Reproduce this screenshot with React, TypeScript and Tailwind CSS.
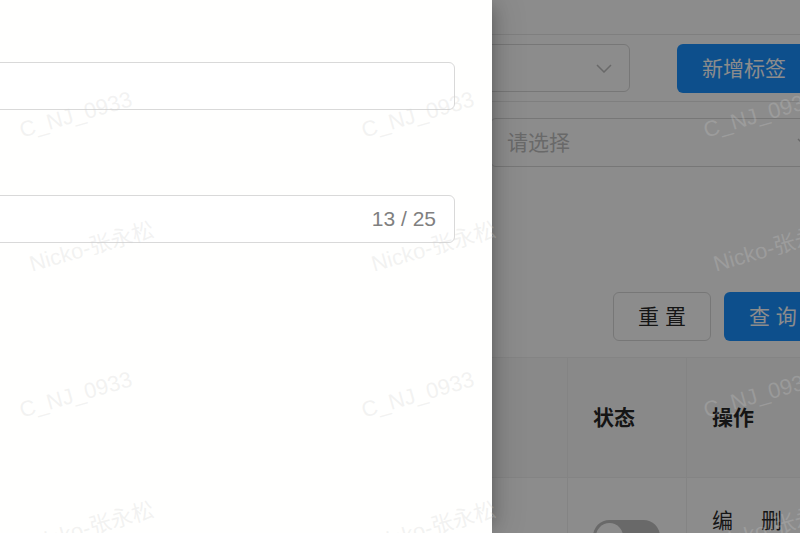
import React from 'react'

const font = { fontFamily: '"Liberation Sans", "Noto Sans CJK SC", sans-serif' }

const Chevron = ({ className }: { className?: string }) => (
    <svg className={className} width="16" height="9" viewBox="0 0 16 9" fill="none">
        <path d="M1 1 L8 8 L15 1" stroke="#bfbfbf" strokeWidth="1.5" />
    </svg>
)

const Watermarks = () => {
    const tiles = Array.from({ length: 6 })
    return (
        <div className="absolute inset-0 overflow-hidden pointer-events-none">
            <div className="flex flex-wrap w-[1026px]">
                {tiles.map((_, i) => (
                    <div key={i} className="w-[342px] h-[280px] shrink-0 pt-[120px]">
                        <div className="ml-[20px] w-max h-[22px] leading-[22px] text-[22px] origin-left rotate-[-16deg] whitespace-nowrap text-[rgba(205,205,205,0.26)]">
                            C_NJ_0933
                        </div>
                        <div className="ml-[30px] mt-[112px] w-max h-[22px] leading-[22px] text-[22px] origin-left rotate-[-16deg] whitespace-nowrap text-[rgba(205,205,205,0.26)]">
                            Nicko-张永松
                        </div>
                    </div>
                ))}
            </div>
        </div>
    )
}

export default function App() {
    return (
        <div className="relative w-[800px] h-[533px] overflow-hidden bg-white" style={font}>
            {/* page under the mask */}
            <div className="h-[533px] bg-white text-[21px]">
                <div className="h-[35px] border-b border-[#e8e8e8]" />
                <div className="flex mt-[9px] pl-[400px]">
                    <div className="w-[230px] h-[48px] shrink-0 border border-[#d9d9d9] rounded-[6px] flex items-center justify-end pr-[17px]">
                        <Chevron />
                    </div>
                    <button className="ml-[47px] w-[150px] h-[49px] bg-[#1890ff] rounded-[6px] text-white text-left pl-[25px] shrink-0">
                        新增标签
                    </button>
                </div>
                <div className="h-[9px] border-b border-[#e8e8e8]" />
                <div className="mt-[16px] ml-[490px] w-[330px] h-[49px] border border-[#d9d9d9] rounded-[6px] flex items-center justify-between pl-[16px] pr-[18px]">
                    <span className="text-[#bfbfbf]">请选择</span>
                    <Chevron className="mr-[-12px]" />
                </div>
                <div className="flex mt-[125px] pl-[613px] gap-[13px]">
                    <button className="w-[98px] h-[49px] border border-[#d9d9d9] rounded-[6px] text-[#000000d9] shrink-0">
                        重 置
                    </button>
                    <button className="w-[120px] h-[49px] bg-[#1890ff] rounded-[6px] text-white text-left pl-[25px] shrink-0">
                        查 询
                    </button>
                </div>
                <div className="mt-[16px] ml-[490px] border-t border-[#f0f0f0]">
                    <div className="flex h-[120px] bg-[#fafafa] border-b border-[#f0f0f0] font-semibold text-[#000000d9]">
                        <div className="w-[78px] border-r border-[#f0f0f0]" />
                        <div className="w-[119px] border-r border-[#f0f0f0] flex items-center pl-[25px]">状态</div>
                        <div className="flex-1 flex items-center pl-[25px]">操作</div>
                    </div>
                    <div className="flex h-[80px]">
                        <div className="w-[78px] border-r border-[#f0f0f0]" />
                        <div className="w-[119px] border-r border-[#f0f0f0] pl-[25px] pt-[42px]">
                            <div className="w-[67px] h-[33px] rounded-full bg-[#bfbfbf] p-[3px]">
                                <div className="w-[27px] h-[27px] rounded-full bg-white" />
                            </div>
                        </div>
                        <div className="flex-1 flex gap-[27px] pl-[25px] pt-[28px] text-[#000000d9] leading-[30px]">
                            <span className="w-[22px]">编辑</span>
                            <span className="w-[22px]">删除</span>
                        </div>
                    </div>
                </div>
            </div>

            {/* mask */}
            <div className="absolute inset-0 bg-black/45" />

            {/* drawer */}
            <div className="absolute left-0 top-0 bottom-0 w-[492px] bg-[#fffffe] pr-[37px] shadow-[6px_0_16px_-8px_rgba(0,0,0,0.35),9px_0_28px_0_rgba(0,0,0,0.1)]">
                <div className="-ml-[30px] mt-[62px] h-[48px] border border-[#d9d9d9] rounded-[6px] bg-white" />
                <div className="-ml-[30px] mt-[85px] h-[48px] border border-[#d9d9d9] rounded-[6px] bg-white flex items-center justify-end pr-[18px] text-[21px] text-[#808080]">
                    13 / 25
                </div>
            </div>

            <Watermarks />
        </div>
    )
}
